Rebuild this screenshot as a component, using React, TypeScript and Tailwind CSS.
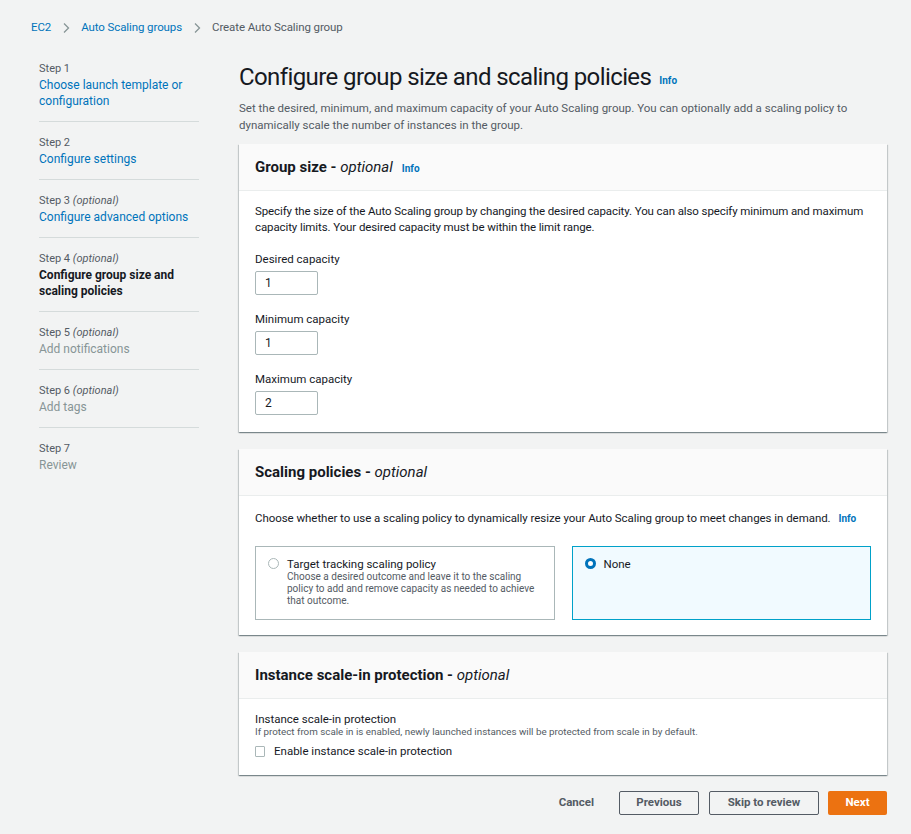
import React from "react";

const font = { fontFamily: "Roboto, 'Liberation Sans', Arial, sans-serif" };

function Chevron() {
  return (
    <svg width="8" height="12" viewBox="0 0 8 12" className="mx-[11px]">
      <path d="M2 1.5 L6.5 6 L2 10.5" fill="none" stroke="#879596" strokeWidth="1.3" />
    </svg>
  );
}

function NavItem({ step, optional, title, state, first, last }: { step: string; optional?: boolean; title: React.ReactNode; state: "link" | "active" | "disabled"; first?: boolean; last?: boolean }) {
  const cls =
    state === "link"
      ? "text-[#0073bb]"
      : state === "active"
      ? "text-[#16191f] font-bold"
      : "text-[#879596]";
  return (
    <div className={`${first ? "pt-[1px]" : "pt-[13px]"} pb-[12px] ${last ? "" : "border-b border-[#d5dbdb]"}`}>
      <div className="text-[11px] leading-[16px] text-[#545b64]">
        {step} {optional && <i>(optional)</i>}
      </div>
      <div className={`text-[12px] leading-[16px] ${cls}`}>{title}</div>
    </div>
  );
}

function Card({ title, info, children }: { title: string; info?: boolean; children: React.ReactNode }) {
  return (
    <div className="bg-white shadow-[0_1px_1px_0_rgba(0,28,36,0.3),1px_1px_1px_0_rgba(0,28,36,0.15),-1px_1px_1px_0_rgba(0,28,36,0.15)]">
      <div className="h-[47px] flex items-center px-[16px] bg-[#fafafa] border-b border-[#eaeded]">
        <span className="text-[15px] font-bold text-[#16191f] mt-[1px]">
          {title} - <i className="font-normal">optional</i>
        </span>
        {info && <span className="ml-[9px] mt-[2px] text-[10px] font-bold text-[#0073bb]">Info</span>}
      </div>
      {children}
    </div>
  );
}

function NumInput({ v }: { v: string }) {
  return (
    <div className="mt-[4px] w-[63px] h-[24px] border border-[#aab7b8] rounded-[2px] flex items-center px-[9px] text-[12px] text-[#16191f]">
      {v}
    </div>
  );
}

export default function App() {
  return (
    <div style={font} className="w-[911px] h-[834px] bg-[#f2f3f3] text-[#16191f] overflow-hidden">
      <div className="flex items-center h-[16px] mt-[20px] ml-[31px] text-[11.5px] tracking-[-0.1px]">
        <span className="text-[#0073bb]">EC2</span>
        <Chevron />
        <span className="text-[#0073bb]">Auto Scaling groups</span>
        <Chevron />
        <span className="text-[#545b64]">Create Auto Scaling group</span>
      </div>
      <div className="flex mt-[24px]">
        <div className="ml-[39px] w-[160px] shrink-0">
          <NavItem first step="Step 1" title={<>Choose launch template or<br />configuration</>} state="link" />
          <NavItem step="Step 2" title="Configure settings" state="link" />
          <NavItem step="Step 3" optional title="Configure advanced options" state="link" />
          <NavItem step="Step 4" optional title={<>Configure group size and<br />scaling policies</>} state="active" />
          <NavItem step="Step 5" optional title="Add notifications" state="disabled" />
          <NavItem step="Step 6" optional title="Add tags" state="disabled" />
          <NavItem last step="Step 7" title="Review" state="disabled" />
        </div>
        <div className="ml-[40px] w-[648px]">
          <div className="flex items-center h-[34px]">
            <h1 className="text-[24px] tracking-[-0.6px] text-[#16191f] leading-[34px]">Configure group size and scaling policies</h1>
            <span className="ml-[8px] mt-[6px] text-[10px] font-bold text-[#0073bb]">Info</span>
          </div>
          <p className="mt-[6px] text-[11.5px] leading-[17px] text-[#545b64]">
            Set the desired, minimum, and maximum capacity of your Auto Scaling group. You can optionally add a scaling policy to
            <br />dynamically scale the number of instances in the group.
          </p>
          <div className="mt-[10px]">
            <Card title="Group size" info>
              <div className="px-[16px] pt-[12px] pb-[17px]">
                <p className="text-[11.5px] leading-[16px] tracking-[-0.1px] whitespace-nowrap">
                  Specify the size of the Auto Scaling group by changing the desired capacity. You can also specify minimum and maximum
                  <br />capacity limits. Your desired capacity must be within the limit range.
                </p>
                <div className="mt-[16px] text-[11.5px] leading-[16px]">Desired capacity</div>
                <NumInput v="1" />
                <div className="mt-[16px] text-[11.5px] leading-[16px]">Minimum capacity</div>
                <NumInput v="1" />
                <div className="mt-[16px] text-[11.5px] leading-[16px]">Maximum capacity</div>
                <NumInput v="2" />
              </div>
            </Card>
          </div>
          <div className="mt-[17px]">
            <Card title="Scaling policies">
              <div className="px-[16px] pt-[14px] pb-[15px]">
                <p className="text-[11.5px] leading-[16px] tracking-[-0.05px] whitespace-nowrap">
                  Choose whether to use a scaling policy to dynamically resize your Auto Scaling group to meet changes in demand.
                  <span className="ml-[8px] text-[10px] font-bold text-[#0073bb]">Info</span>
                </p>
                <div className="mt-[19px] grid grid-cols-2 gap-[17px]">
                  <div className="h-[74px] border border-[#aab7b8] flex px-[12px] pt-[10px]">
                    <span className="mt-[1px] w-[11px] h-[11px] rounded-full border border-[#aab7b8] bg-white shrink-0" />
                    <div className="ml-[8px]">
                      <div className="text-[11.5px] leading-[14px]">Target tracking scaling policy</div>
                      <div className="text-[10px] leading-[12px] text-[#545b64]">
                        Choose a desired outcome and leave it to the scaling
                        <br />policy to add and remove capacity as needed to achieve
                        <br />that outcome.
                      </div>
                    </div>
                  </div>
                  <div className="h-[74px] border border-[#00a1c9] bg-[#f1faff] flex px-[12px] pt-[10px]">
                    <span className="mt-[1px] w-[11px] h-[11px] rounded-full border-[3px] border-[#0073bb] bg-white shrink-0" />
                    <div className="ml-[8px] text-[11.5px] leading-[14px]">None</div>
                  </div>
                </div>
              </div>
            </Card>
          </div>
          <div className="mt-[17px]">
            <Card title="Instance scale-in protection">
              <div className="px-[16px] pt-[13px] pb-[17px]">
                <div className="text-[11.5px] leading-[14px]">Instance scale-in protection</div>
                <div className="text-[9.8px] leading-[12px] text-[#545b64] whitespace-nowrap">If protect from scale in is enabled, newly launched instances will be protected from scale in by default.</div>
                <div className="mt-[6px] flex items-center">
                  <span className="w-[10px] h-[11px] border border-[#aab7b8] rounded-[1px] bg-white" />
                  <span className="ml-[9px] text-[11.5px] leading-[14px]">Enable instance scale-in protection</span>
                </div>
              </div>
            </Card>
          </div>
          <div className="mt-[16px] flex justify-end items-center text-[11.5px] font-bold text-[#545b64]">
            <span className="mr-[25px]">Cancel</span>
            <span className="h-[24px] w-[80px] border border-[#545b64] rounded-[2px] flex items-center justify-center">Previous</span>
            <span className="ml-[10px] h-[24px] w-[110px] border border-[#545b64] rounded-[2px] flex items-center justify-center">Skip to review</span>
            <span className="ml-[9px] h-[24px] w-[59px] bg-[#ec7211] text-white rounded-[2px] flex items-center justify-center">Next</span>
          </div>
        </div>
      </div>
    </div>
  );
}
